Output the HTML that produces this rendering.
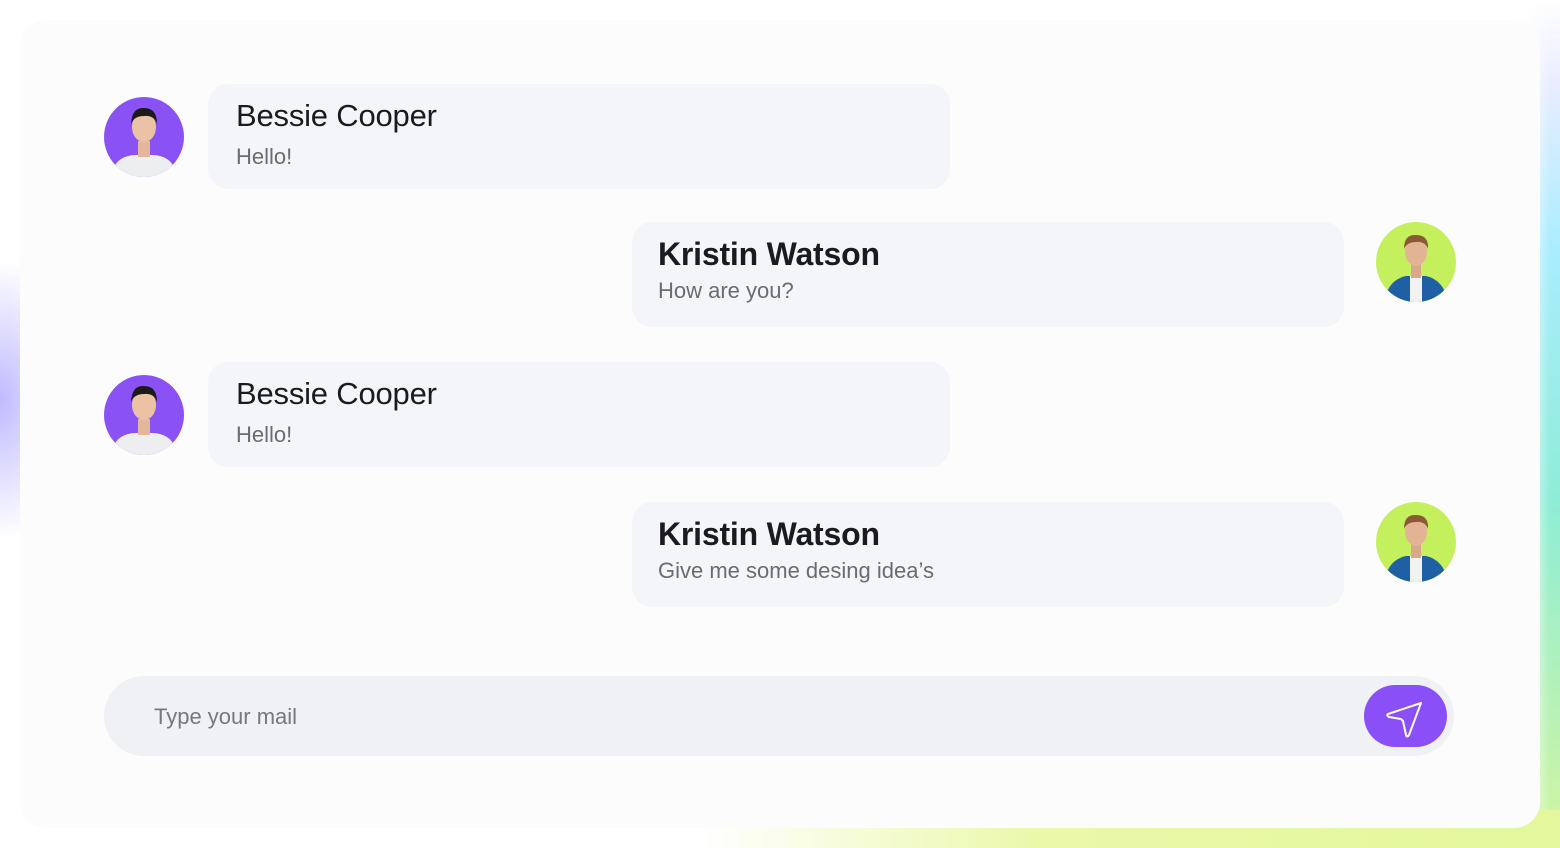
<!DOCTYPE html>
<html><head><style>
*{margin:0;padding:0;box-sizing:border-box}
body{width:1560px;height:848px;overflow:hidden;position:relative;font-family:"Liberation Sans",sans-serif;
background:
radial-gradient(ellipse 120px 200px at 0px 400px,rgba(140,130,255,.55),transparent 70%),
#fff;}
.bg2{position:absolute;left:0;top:0;width:1560px;height:848px;
background:linear-gradient(180deg,rgba(255,255,255,0) 0,rgba(220,225,255,.6) 80px,rgba(160,235,255,.9) 250px,rgba(130,235,210,.9) 500px,rgba(210,245,160,1) 848px);
-webkit-mask:linear-gradient(90deg,transparent 1520px,#000 1550px);}
.bg3{position:absolute;left:700px;top:810px;width:860px;height:38px;background:linear-gradient(90deg,rgba(230,250,180,0),#eaf8a8 40%,#e4f79c)}
.card{position:absolute;left:20px;top:20px;width:1520px;height:808px;background:#fcfcfd;border-radius:26px}
.b{position:absolute;background:#f3f5f8;border-radius:20px;height:105px;padding-left:28px}
.n{font-size:31px;color:#1b1b1f;position:absolute;top:14px;letter-spacing:-.2px}
.m{font-size:22px;color:#6b6b70;position:absolute;top:60px}
.av{position:absolute;width:80px;height:80px;border-radius:50%;overflow:hidden}
.p{background:#8a52f5}.g{background:#c4f05e}
</style></head><body>
<div class="bg2"></div><div class="bg3"></div>
<div class="card"></div>
<svg width="0" height="0" style="position:absolute"><defs>
<g id="asian"><rect x="10" y="58" width="60" height="30" rx="22" fill="#eceef0"/><rect x="34" y="44" width="12" height="16" fill="#e3b89a"/><ellipse cx="40" cy="30" rx="12" ry="15" fill="#ecc2a4"/><path d="M27 27 Q28 10 40 11 Q53 11 53 27 Q50 18 40 19 Q30 19 27 27Z" fill="#1d1a1a"/></g>
<g id="man"><path d="M8 80 Q12 58 30 54 L50 54 Q68 58 72 80Z" fill="#1f5fa3"/><rect x="34" y="54" width="12" height="26" fill="#f2f2f2"/><rect x="35" y="42" width="10" height="14" fill="#d9a88a"/><ellipse cx="40" cy="30" rx="11" ry="14" fill="#e2b495"/><path d="M28 27 Q28 12 40 13 Q53 13 52 27 Q49 19 40 20 Q31 20 28 27Z" fill="#8a5a36"/></g>
</defs></svg>
<div class="av p" style="left:104px;top:97px"><svg width="80" height="80"><use href="#asian"/></svg></div>
<div class="b" style="left:208px;top:84px;width:742px"><div class="n">Bessie Cooper</div><div class="m">Hello!</div></div>
<div class="b" style="left:632px;top:222px;width:712px;padding-left:26px"><div class="n" style="font-weight:bold;font-size:32px;top:14px;left:26px">Kristin Watson</div><div class="m" style="top:56px;left:26px">How are you?</div></div>
<div class="av g" style="left:1376px;top:222px"><svg width="80" height="80"><use href="#man"/></svg></div>
<div class="av p" style="left:104px;top:375px"><svg width="80" height="80"><use href="#asian"/></svg></div>
<div class="b" style="left:208px;top:362px;width:742px"><div class="n">Bessie Cooper</div><div class="m">Hello!</div></div>
<div class="b" style="left:632px;top:502px;width:712px"><div class="n" style="font-weight:bold;font-size:32px;top:14px;left:26px">Kristin Watson</div><div class="m" style="top:56px;left:26px">Give me some desing idea’s</div></div>
<div class="av g" style="left:1376px;top:502px"><svg width="80" height="80"><use href="#man"/></svg></div>
<div style="position:absolute;left:104px;top:676px;width:1350px;height:80px;border-radius:40px;background:#eff1f4"><div style="position:absolute;left:50px;top:28px;font-size:22px;color:#77777c">Type your mail</div></div>
<div style="position:absolute;left:1364px;top:685px;width:83px;height:62px;border-radius:31px;background:#8a4ff6">
<svg width="83" height="62" viewBox="0 0 83 62"><path d="M24 29 L57 18 L45 50 Q43 53 42 50 L39 36 Q38 35 37 34 L25 32 Q22 30 24 29Z" fill="none" stroke="#fff" stroke-width="2" stroke-linejoin="round"/></svg></div>
</body></html>
